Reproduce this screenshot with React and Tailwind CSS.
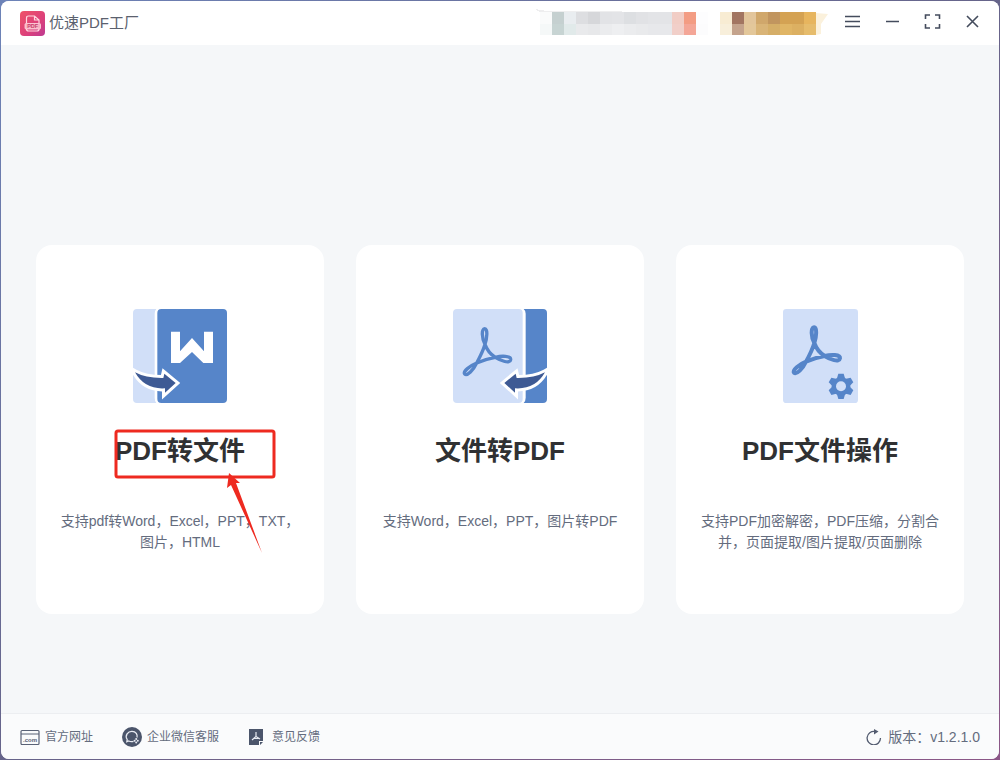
import React from 'react';

const mosaicRows = [
  ['#fafbfb', '#c5d0d0', '#e9edf0', '#dddee1', '#d6d7da', '#e2e3e6', '#e3e4e7', '#dddfe2', '#e1e2e5', '#e3e4e7', '#e3e4e7', '#f1cdc5', '#f39c83', '#fdfdfe', '#ffffff', '#f8ecd3', '#a27561', '#e2c59b', '#d0a76b', '#c1955f', '#d4a253', '#d4a253', '#e7b55e'],
  ['#f5f8f8', '#c7d4d3', '#e1eaea', '#e9eaec', '#e7e8ea', '#ebecee', '#eeeff1', '#ebecee', '#e9eaec', '#e7e8eb', '#e7e8eb', '#f1cfc9', '#f4a697', '#fcfcfd', '#ffffff', '#f8efdb', '#c4a38c', '#e3c79a', '#d9b477', '#d5ae68', '#e0b565', '#dcb062', '#e6bc6c'],
];

function Mosaic() {
  return (
    <svg className="h-9 w-[296px] shrink-0" viewBox="534 0 296 36" aria-hidden="true" shapeRendering="crispEdges">
      <path d="M535 9l12 2 150 1H540z" fill="#eeeeef" />
      {mosaicRows.map((row, y) =>
        row.map((color, x) => (
          <rect key={`${y}-${x}`} x={540 + x * 12} y={12 + y * 12} width="12" height={y ? 11 : 12} fill={color} />
        )),
      )}
      <path d="M816 13l12 1-7 10v10l-5 1z" fill="#fbf1dc" shapeRendering="auto" />
    </svg>
  );
}

function AppLogo() {
  return (
    <svg className="size-[25px] shrink-0" viewBox="0 0 25 25" aria-hidden="true">
      <defs>
        <linearGradient id="logo-fill" x1="0" y1="0" x2="1" y2="1">
          <stop offset="0" stopColor="#ef5368" />
          <stop offset="0.6" stopColor="#dc407b" />
          <stop offset="1" stopColor="#bd3b92" />
        </linearGradient>
      </defs>
      <rect width="25" height="25" rx="4" fill="url(#logo-fill)" />
      <path d="M6.500 12V7q0-2 2-2h6L19 9v3M14.500 5V9H19M6.500 18q0 2 2 2h8.500q2 0 2-2" fill="none" stroke="#ffd7e0" strokeWidth="1.200" />
      <rect x="5" y="12.500" width="15.500" height="5.500" rx="1" fill="#f7b3c2" stroke="#ffd7e0" strokeWidth="0.800" />
      <text x="12.700" y="17.200" fontSize="5.500" fontWeight="bold" textAnchor="middle" fill="#c93b6b" fontFamily="Liberation Sans, sans-serif">PDF</text>
    </svg>
  );
}

const acrobat =
  'M165 148C172 168 185 180 196 187C212 197 240 208 242 194C243 182 215 182 196 187C178 190 158 196 140 204C120 212 98 230 104 237C112 244 130 225 140 204C150 186 160 165 165 148C171 130 174 101 164 101C154 101 155 130 165 148Z';

function ToFileIcon() {
  return (
    <svg className="size-[94px]" viewBox="69 42 282 282" aria-hidden="true">
      <path d="M81 42h58q-5 5-5 14v252q0 10 5 16H81q-12 0-12-12V54q0-12 12-12Z" fill="#d1dff8" />
      <rect x="142" y="42" width="209" height="282" rx="12" fill="#5685c9" />
      <path d="M183 110h27v59l36-40 36 40v-59h27v94h-29l-34-33-36 33h-27Z" fill="#fff" />
      <path d="M75 232Q108 250 160 249L163 236L197 264L165 293V280Q104 284 75 232Z" fill="#3e5a94" stroke="#fff" strokeWidth="18" paintOrder="stroke" />
    </svg>
  );
}

function ToPdfIcon() {
  return (
    <svg className="size-[94px]" viewBox="69 42 282 282" aria-hidden="true">
      <rect x="69" y="42" width="209" height="282" rx="12" fill="#d1dff8" />
      <path d="M281 42h58q12 0 12 12v258q0 12-12 12h-58q6-6 6-16V56q0-9-6-14Z" fill="#5685c9" />
      <path d={acrobat} fill="none" stroke="#5685c9" strokeWidth="10" strokeLinejoin="round" />
      <path d="M345 232Q312 250 260 249L257 236L223 264L255 293V280Q316 284 345 232Z" fill="#3e5a94" stroke="#fff" strokeWidth="18" paintOrder="stroke" />
    </svg>
  );
}

function OperateIcon() {
  return (
    <svg className="h-[94px] w-[75px]" viewBox="69 42 225 282" aria-hidden="true">
      <rect x="69" y="42" width="225" height="282" rx="10" fill="#d1dff8" />
      <path d={acrobat} transform="translate(-2 -4)" fill="none" stroke="#5685c9" strokeWidth="12" strokeLinejoin="round" />
      <g fill="#5685c9">
        {[0, 60, 120].map((angle) => (
          <path key={angle} d="M235 236h16l5 17v42l-5 17h-16l-5-17v-42Z" transform={`rotate(${angle} 243 274)`} />
        ))}
        <circle cx="243" cy="274" r="28" />
      </g>
      <circle cx="243" cy="274" r="15" fill="#d1dff8" />
    </svg>
  );
}

function Annotation() {
  return (
    <svg className="pointer-events-none absolute top-0 left-1/2 -mt-0.5 -ml-[66px] h-[126px] w-[164px]" viewBox="114 429 164 126" aria-hidden="true">
      <rect x="116" y="431" width="158" height="46" rx="2" fill="none" stroke="#ee2a20" strokeWidth="3" />
      <path d="M229 473L240 483L236 483L262 553L231 485L227 488Z" fill="#ee2a20" />
    </svg>
  );
}

const cards = [
  { title: 'PDF转文件', text: '支持pdf转Word，Excel，PPT，TXT，图片，HTML', Icon: ToFileIcon, marked: true },
  { title: '文件转PDF', text: '支持Word，Excel，PPT，图片转PDF', Icon: ToPdfIcon },
  { title: 'PDF文件操作', text: '支持PDF加密解密，PDF压缩，分割合并，页面提取/图片提取/页面删除', Icon: OperateIcon },
];

const controls = [
  { label: '菜单', d: 'M2 4.500H17M2 9.500H17M2 14.500H17' },
  { label: '最小化', d: 'M3 9.500H16' },
  { label: '最大化', d: 'M7 3H2.500V7M12 3H16.500V7M7 16H2.500V12M12 16H16.500V12' },
  { label: '关闭', d: 'M4 4L15 15M15 4L4 15' },
];

function SiteIcon() {
  return (
    <svg className="h-5 w-5" viewBox="0 0 20 20" aria-hidden="true">
      <rect x="1" y="3.500" width="18" height="14" rx="1" fill="none" stroke="#596276" strokeWidth="1.200" />
      <path d="M1 7h18" stroke="#596276" />
      <text x="10" y="15" fontSize="6" fontWeight="bold" textAnchor="middle" fill="#596276" fontFamily="Liberation Sans, sans-serif">.com</text>
    </svg>
  );
}

function ServiceIcon() {
  return (
    <svg className="h-5 w-5" viewBox="0 0 20 20" aria-hidden="true">
      <circle cx="10" cy="10" r="10" fill="#4b556b" />
      <path d="M11.500 14.300Q9 15 6.800 14L4.800 14.800L5.200 12.500C2.500 8.500 6 4.200 10 4.300C14 4.400 15.800 7.500 15 10.500" fill="none" stroke="#e8ebf2" strokeWidth="1.300" />
      <g fill="#e8ebf2">
        <circle cx="14.200" cy="12" r="1" />
        <circle cx="12.600" cy="13.800" r="1" />
        <circle cx="15.800" cy="13.800" r="1" />
        <circle cx="14.200" cy="15.400" r="1" />
      </g>
    </svg>
  );
}

function FeedbackIcon() {
  return (
    <svg className="h-5 w-4" viewBox="0 0 16 20" aria-hidden="true">
      <path d="M1 2h14v12h-4v4H1ZM12 15h3l-3 3Z" fill="#4b556b" />
      <path d="M8 5v4.500L4 13M8 9.500l4 2.500M6 11.500h5" fill="none" stroke="#e8ebf2" strokeWidth="1.200" />
    </svg>
  );
}

export default function App() {
  return (
    <div className="flex min-h-screen flex-col bg-linear-to-br from-[#6d83b8] via-[#66648a] to-[#8b5687] p-px font-['Liberation_Sans','Noto_Sans_CJK_SC',sans-serif] text-[#646c7e]">
      <div className="flex grow flex-col overflow-hidden rounded-lg bg-[#f5f7f9]">
        <header className="flex h-11 items-start bg-white pr-[17px] pl-[19px]">
          <div className="flex h-11 items-center gap-1">
            <AppLogo />
            <h1 className="text-[15px] leading-5 font-normal text-[#5b616e]">优速PDF工厂</h1>
          </div>
          <div className="ml-auto flex items-center gap-[13px]">
            <div className="-mt-px self-start"><Mosaic /></div>
            <div className="flex h-10 items-center gap-[21px]">
              {controls.map(({ label, d }) => (
                <button key={label} type="button" aria-label={label} className="size-[19px]">
                  <svg className="size-[19px]" viewBox="0 0 19 19" fill="none" stroke="#444c5d" strokeWidth="1.600" aria-hidden="true">
                    <path d={d} />
                  </svg>
                </button>
              ))}
            </div>
          </div>
        </header>

        <main className="grid grow grid-cols-3 content-start gap-8 px-[35px] pt-[200px] pb-16">
          {cards.map(({ title, text, Icon, marked }) => (
            <button key={title} type="button" className="flex flex-col items-center justify-start rounded-2xl bg-white px-6 pt-16 pb-[61px]">
              <Icon />
              <span className="relative mt-7 w-full text-[26px] leading-10 font-bold text-[#303133]">
                {title}
                {marked && <Annotation />}
              </span>
              <span className="mt-10 text-sm leading-[21px]">{text}</span>
            </button>
          ))}
        </main>

        <footer className="flex h-[46px] items-center border-t border-[#eceef1] bg-[#fafbfc] px-[19px] text-xs">
          <nav className="flex items-center gap-[29px]">
            <a href="#site" className="flex items-center gap-[5px]"><SiteIcon />官方网址</a>
            <a href="#service" className="flex items-center gap-[5px]"><ServiceIcon />企业微信客服</a>
            <a href="#feedback" className="flex items-center gap-2"><FeedbackIcon />意见反馈</a>
          </nav>
          <button type="button" className="ml-auto flex items-center gap-1.5 text-sm">
            <svg className="size-4" viewBox="0 0 16 16" fill="none" stroke="#535c70" strokeWidth="1.300" aria-hidden="true">
              <path d="M14.500 9A6.700 6.700 0 1 1 9 2.500" />
              <path d="M8 0L12.500 2.500L8 5.500Z" fill="#535c70" stroke="none" />
            </svg>
            版本：v1.2.1.0
          </button>
        </footer>
      </div>
    </div>
  );
}
